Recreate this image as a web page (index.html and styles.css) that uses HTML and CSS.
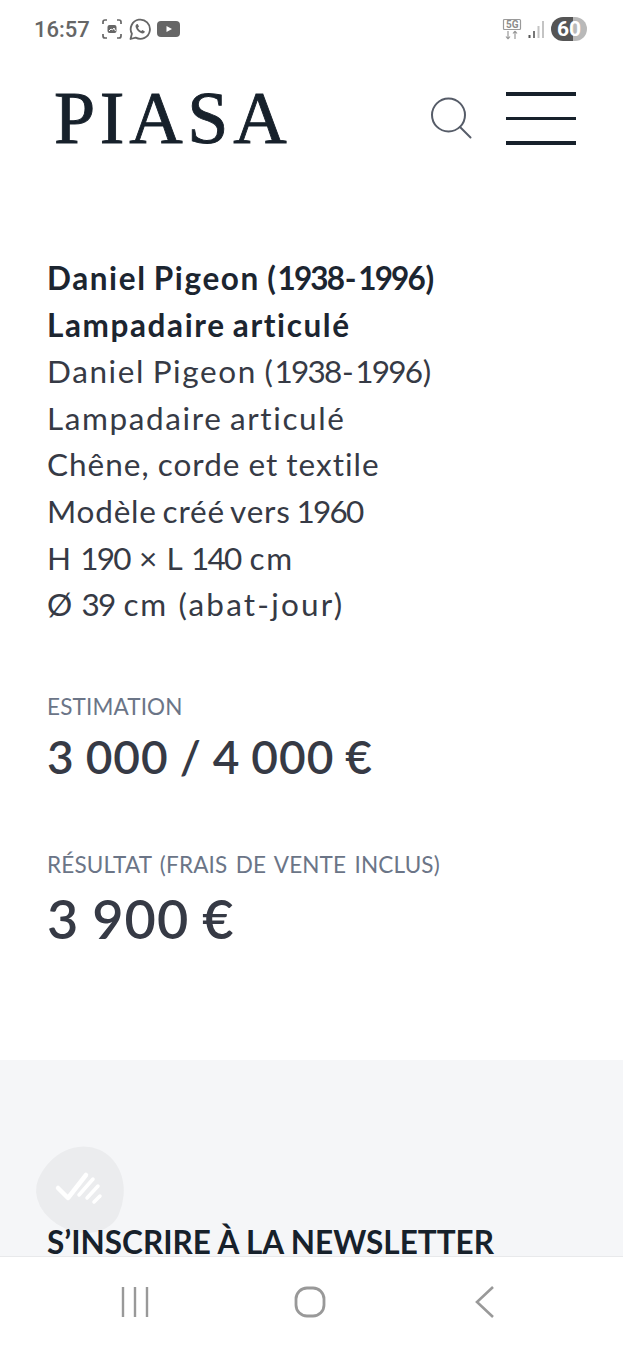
FILE: index.html
```html
<!DOCTYPE html>
<html lang="fr">
<head>
<meta charset="utf-8">
<title>PIASA</title>
<link rel="stylesheet" href="styles.css">
</head>
<body>
<div class="screen">
  <div class="statusbar">
    <div class="status-left">
      <span class="clock">16:57</span>
      <svg class="st-icon" width="22" height="22" viewBox="0 0 22 22" fill="none" stroke="#666" stroke-width="1.7">
        <path d="M2 6V4a2 2 0 0 1 2-2h2M16 2h2a2 2 0 0 1 2 2v2M20 16v2a2 2 0 0 1-2 2h-2M6 20H4a2 2 0 0 1-2-2v-2"/>
        <rect x="6.5" y="7" width="9" height="8" rx="2" fill="#666" stroke="none"/>
        <path d="M8 13l2-2 1.500 1 1.500-2 1.500 3" stroke="#fff" stroke-width="1"/>
      </svg>
      <svg class="st-icon" width="22" height="22" viewBox="0 0 22 22" fill="none">
        <path d="M1.500 21l1.400-5.200A9.600 9.600 0 1 1 6.700 19.600z" stroke="#666" stroke-width="1.800" stroke-linejoin="round"/>
        <path d="M7.600 6.300c-.9.700-1.300 1.800-.9 3 .9 2.800 3 5 5.800 6 1.200.4 2.300 0 3-.9l.4-1-2.500-1.400-1.100 1.100c-1.500-.6-2.800-1.900-3.400-3.400l1.100-1.100L8.700 6z" fill="#666"/>
      </svg>
      <svg class="st-icon" width="23" height="16" viewBox="0 0 23 16">
        <rect width="23" height="16" rx="4" fill="#666"/>
        <path d="M9.500 5l5.500 3-5.500 3z" fill="#fff"/>
      </svg>
    </div>
    <div class="status-right">
      <svg width="20" height="23" viewBox="0 0 20 23" fill="none" stroke="#9a9a9a">
        <rect x="1.500" y="1.500" width="17" height="10" rx="1" stroke-width="1.200"/>
        <path d="M6 13v8M6 21l-2-2.500M6 21l2-2.500M13 21v-8M13 13l-2 2.500M13 13l2 2.500" stroke-width="1.200"/>
      </svg>
      <span class="net-label">5G</span>
      <svg class="signal" width="17" height="18" viewBox="0 0 17 18">
        <rect x="0.500" y="15" width="2" height="3" fill="#555"/>
        <rect x="5" y="11" width="2" height="7" fill="#777"/>
        <rect x="9.500" y="6" width="2" height="12" fill="#c4c4c4"/>
        <rect x="14" y="1" width="2" height="17" fill="#c4c4c4"/>
      </svg>
      <div class="battery">60</div>
    </div>
  </div>

  <header class="site-header">
    <div class="logo">PIASA</div>
    <div class="header-actions">
      <svg class="search" width="44" height="44" viewBox="0 0 44 44" fill="none" stroke="#565c68" stroke-width="2">
        <circle cx="19.500" cy="19" r="16.500"/>
        <path d="M31 31l10.500 10.500" stroke-linecap="round"/>
      </svg>
      <div class="burger"><span></span><span class="thin"></span><span></span></div>
    </div>
  </header>

  <main class="content">
    <section class="description">
      <strong>Daniel Pigeon (<span class="num">1938</span>-<span class="num">1996</span>)</strong>
      <strong>Lampadaire articulé</strong>
      <p>Daniel Pigeon (<span class="num">1938</span>-<span class="num">1996</span>)</p>
      <p>Lampadaire articulé</p>
      <p class="tight">Chêne, corde et textile</p>
      <p class="tighter">Modèle créé vers <span class="num">1960</span></p>
      <p>H <span class="num">190</span> × L <span class="num">140</span> cm</p>
      <p>Ø <span class="num">39</span> cm <span class="wide">(abat-jour)</span></p>
    </section>
    <section class="price">
      <div class="label">ESTIMATION</div>
      <div class="value">3 000 / 4 000 €</div>
    </section>
    <section class="price result">
      <div class="label">RÉSULTAT (FRAIS DE VENTE INCLUS)</div>
      <div class="value">3 900 €</div>
    </section>
  </main>

  <footer class="newsletter">
    <h2>S’INSCRIRE À LA NEWSLETTER</h2>
  </footer>

  <div class="badge">
    <svg width="60" height="42" viewBox="0 0 60 42" fill="none" stroke="#fff" stroke-linecap="round">
      <path d="M6 20l10 10L34 7" stroke-width="4.500" stroke-linejoin="round"/>
      <path d="M27 27L41 11" stroke-width="3.500"/>
      <path d="M35 30l11-12" stroke-width="3.500"/>
      <path d="M42 34l6-6" stroke-width="3.500"/>
    </svg>
  </div>

  <nav class="navbar">
    <svg width="30" height="30" viewBox="0 0 30 30" stroke="#999" stroke-width="2.400">
      <path d="M3 0v30M15 0v30M27 0v30"/>
    </svg>
    <svg class="home" width="32" height="32" viewBox="0 0 32 32" fill="none" stroke="#999" stroke-width="2.800">
      <rect x="2" y="2" width="28" height="28" rx="11"/>
    </svg>
    <svg width="22" height="32" viewBox="0 0 22 32" fill="none" stroke="#999" stroke-width="2.600">
      <path d="M19 1L3 16l16 15"/>
    </svg>
  </nav>
</div>
</body>
</html>
```
FILE: styles.css
```css
* { box-sizing: border-box; }
html, body { margin: 0; padding: 0; background: #fff; }
.screen {
  position: relative;
  width: 623px;
  height: 1350px;
  overflow: hidden;
  font-family: Lato, "Noto Sans", sans-serif;
  color: #363a45;
  display: flex;
  flex-direction: column;
}
.statusbar {
  height: 58px;
  padding: 12px 36px 0 34px;
  display: flex;
  justify-content: space-between;
  align-items: flex-start;
}
.status-left, .status-right { display: flex; align-items: center; height: 34px; }
.status-left { gap: 6px; }
.clock { font-family: Roboto, sans-serif; font-size: 22px; font-weight: 500; color: #666; margin-right: 5px; }
.status-right { position: relative; gap: 6px; }
.net-label {
  position: absolute;
  left: 4px;
  top: 7px;
  font-family: Roboto, sans-serif;
  font-size: 10px;
  font-weight: 700;
  color: #8c8c8c;
}
.battery {
  width: 36px;
  height: 24px;
  border-radius: 12px;
  background: linear-gradient(90deg, #555 0 60%, #b9b9b9 60% 100%);
  color: #fff;
  font-family: Roboto, sans-serif;
  font-size: 21px;
  font-weight: 700;
  line-height: 24px;
  text-align: center;
}
.site-header {
  height: 120px;
  padding: 0 47px 0 54px;
  display: flex;
  justify-content: space-between;
  align-items: center;
}
.logo {
  font-family: "Liberation Serif", serif;
  font-size: 74px;
  line-height: 80px;
  letter-spacing: 4.700px;
  color: #17212b;
  -webkit-text-stroke: 0.9px #17212b;
}
.header-actions { display: flex; align-items: center; gap: 33px; }
.burger { width: 70px; height: 53px; display: flex; flex-direction: column; justify-content: space-between; }
.burger span { height: 4px; background: #17212b; }
.burger .thin { height: 3px; }
.content { padding: 77px 47px 0; flex: none; height: 882px; }
.description { font-size: 31.500px; line-height: 46.600px; letter-spacing: 1.600px; word-spacing: -2px; }
.description strong { display: block; font-weight: 700; color: #1c2530; }
.description p { margin: 0; }
.description .tight { letter-spacing: 1px; word-spacing: -1px; }
.description .tighter { letter-spacing: 0.800px; word-spacing: -3px; }
.num { letter-spacing: -1.800px; margin-right: 1.500px; }
.wide { letter-spacing: 2.200px; padding-left: 3px; }
.price { margin-top: 64px; }
.label { font-size: 22.500px; line-height: 30px; color: #6b7587; letter-spacing: 0.150px; word-spacing: 2.500px; }
.value { font-size: 46px; font-weight: 600; line-height: 58px; margin-top: 6px; letter-spacing: 1px; word-spacing: -1.500px; }
.result { margin-top: 64px; }
.result .value { font-size: 54px; margin-top: 10px; }
.newsletter {
  flex: 1;
  background: #f5f6f8;
  padding-top: 162px;
}
.newsletter h2 {
  margin: 0;
  padding-left: 47px;
  font-size: 31.500px;
  line-height: 40px;
  font-weight: 700;
  color: #17212b;
}
.badge {
  position: absolute;
  left: 38px;
  top: 1146px;
  width: 88px;
  height: 86px;
  border-radius: 50% 50% 50% 50% / 60% 60% 40% 40%;
  background: rgba(0, 0, 0, 0.04);
  transform: rotate(24deg);
  display: flex;
  align-items: center;
  justify-content: center;
}
.badge svg { transform: rotate(-24deg); }
.navbar {
  position: absolute;
  left: 0;
  right: 0;
  bottom: 0;
  height: 94px;
  background: #fff;
  border-top: 1px solid #e8e9eb;
  display: flex;
  align-items: center;
  padding: 0 127px 4px 120px;
  justify-content: space-between;
}
.home { margin-left: -4px; }
```
